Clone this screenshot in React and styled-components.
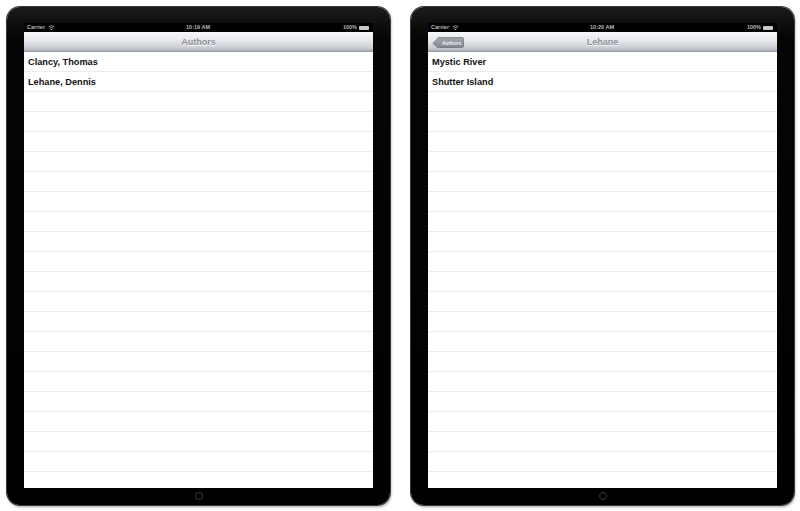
import React from "react";
import styled, { createGlobalStyle } from "styled-components";

const GlobalStyle = createGlobalStyle`
  html, body {
    margin: 0;
    padding: 0;
    background: #ffffff;
  }
  body {
    font-family: "Liberation Sans", Arial, sans-serif;
  }
`;

const ROW_COUNT = 22;

const Page = styled.div`
  display: flex;
  gap: 21px;
  padding: 7px 0 0 7px;
  width: 800px;
  height: 511px;
  box-sizing: border-box;
`;

const Device = styled.div`
  width: 383px;
  height: 498px;
  box-sizing: border-box;
  padding: 16px 17px 0 17px;
  border-radius: 13px;
  background: linear-gradient(180deg, #1c1c1c 0%, #050505 6%, #000 100%);
  box-shadow: 0 0 0 1px #3a3a3a, 1px 2px 3px rgba(0, 0, 0, 0.35);
  display: flex;
  flex-direction: column;
  align-items: center;
`;

const Screen = styled.div`
  width: 349px;
  height: 465px;
  background: #fff;
  display: flex;
  flex-direction: column;
  overflow: hidden;
`;

const StatusBar = styled.div`
  height: 9px;
  flex: none;
  background: #000;
  display: grid;
  grid-template-columns: 1fr auto 1fr;
  align-items: center;
  padding: 0 4px 0 3px;
  font-size: 5.5px;
  font-weight: bold;
  color: #b8b8b8;
  line-height: 9px;
`;

const StatusLeft = styled.div`
  display: flex;
  align-items: center;
  gap: 3px;
`;

const StatusRight = styled.div`
  display: flex;
  justify-content: flex-end;
  align-items: center;
  gap: 2px;
`;

const Battery = styled.span`
  display: inline-block;
  width: 10px;
  height: 4px;
  background: #c8c8c8;
  border-radius: 1px;
`;

const NavBar = styled.div`
  height: 20px;
  flex: none;
  position: relative;
  display: flex;
  align-items: center;
  justify-content: center;
  background: linear-gradient(180deg, #f7f8fa 0%, #e6e8ec 45%, #c9ccd3 85%, #a9adb6 100%);
  border-bottom: 1px solid #9a9ea6;
  box-sizing: border-box;
`;

const NavTitle = styled.div`
  font-size: 9px;
  font-weight: bold;
  color: #8b8f97;
  text-shadow: 0 1px 0 #fff;
`;

const BackButton = styled.div`
  position: absolute;
  left: 9px;
  top: 5px;
  height: 11px;
  padding: 0 3px 0 5px;
  display: flex;
  align-items: center;
  font-size: 5px;
  font-weight: bold;
  color: #f2f2f2;
  background: linear-gradient(180deg, #a3a7ae 0%, #80848c 100%);
  border-radius: 3px;
  box-shadow: inset 0 0 0 0.5px #6f737a;

  &::before {
    content: "";
    position: absolute;
    left: -3px;
    top: 1.6px;
    width: 7.6px;
    height: 7.6px;
    background: linear-gradient(135deg, #a3a7ae 0%, #80848c 100%);
    transform: rotate(45deg);
    border-radius: 1px;
  }
`;

const BackLabel = styled.span`
  position: relative;
`;

const List = styled.div`
  flex: 1;
  display: flex;
  flex-direction: column;
`;

const Row = styled.div`
  height: 20px;
  flex: none;
  box-sizing: border-box;
  border-bottom: 1px solid #ececec;
  padding-left: 4px;
  display: flex;
  align-items: center;
  font-size: 9.2px;
  font-weight: bold;
  color: #111;
`;

const HomeBar = styled.div`
  flex: 1;
  display: flex;
  align-items: center;
  justify-content: center;
`;

const HomeButton = styled.div`
  width: 8px;
  height: 8px;
  border-radius: 50%;
  border: 1.5px solid #3b3b3b;
  box-sizing: border-box;
  margin-top: -2px;
`;

const Wifi = () => (
  <svg width="7" height="5" viewBox="0 0 14 10">
    <path d="M1 4 A9 9 0 0 1 13 4" stroke="#b8b8b8" strokeWidth="1.6" fill="none" />
    <path d="M3.5 6.5 A5.5 5.5 0 0 1 10.5 6.5" stroke="#b8b8b8" strokeWidth="1.6" fill="none" />
    <circle cx="7" cy="9" r="1.3" fill="#b8b8b8" />
  </svg>
);

const Tablet = ({ time, title, back, items }) => {
  const rows = Array.from({ length: ROW_COUNT }, (_, i) => items[i] || "");
  return (
    <Device>
      <Screen>
        <StatusBar>
          <StatusLeft>
            Carrier <Wifi />
          </StatusLeft>
          <div>{time}</div>
          <StatusRight>
            100% <Battery />
          </StatusRight>
        </StatusBar>
        <NavBar>
          {back && (
            <BackButton>
              <BackLabel>{back}</BackLabel>
            </BackButton>
          )}
          <NavTitle>{title}</NavTitle>
        </NavBar>
        <List>
          {rows.map((label, i) => (
            <Row key={i}>{label}</Row>
          ))}
        </List>
      </Screen>
      <HomeBar>
        <HomeButton />
      </HomeBar>
    </Device>
  );
};

export default function App() {
  return (
    <>
      <GlobalStyle />
      <Page>
        <Tablet
          time="10:19 AM"
          title="Authors"
          items={["Clancy, Thomas", "Lehane, Dennis"]}
        />
        <Tablet
          time="10:20 AM"
          title="Lehane"
          back="Authors"
          items={["Mystic River", "Shutter Island"]}
        />
      </Page>
    </>
  );
}
